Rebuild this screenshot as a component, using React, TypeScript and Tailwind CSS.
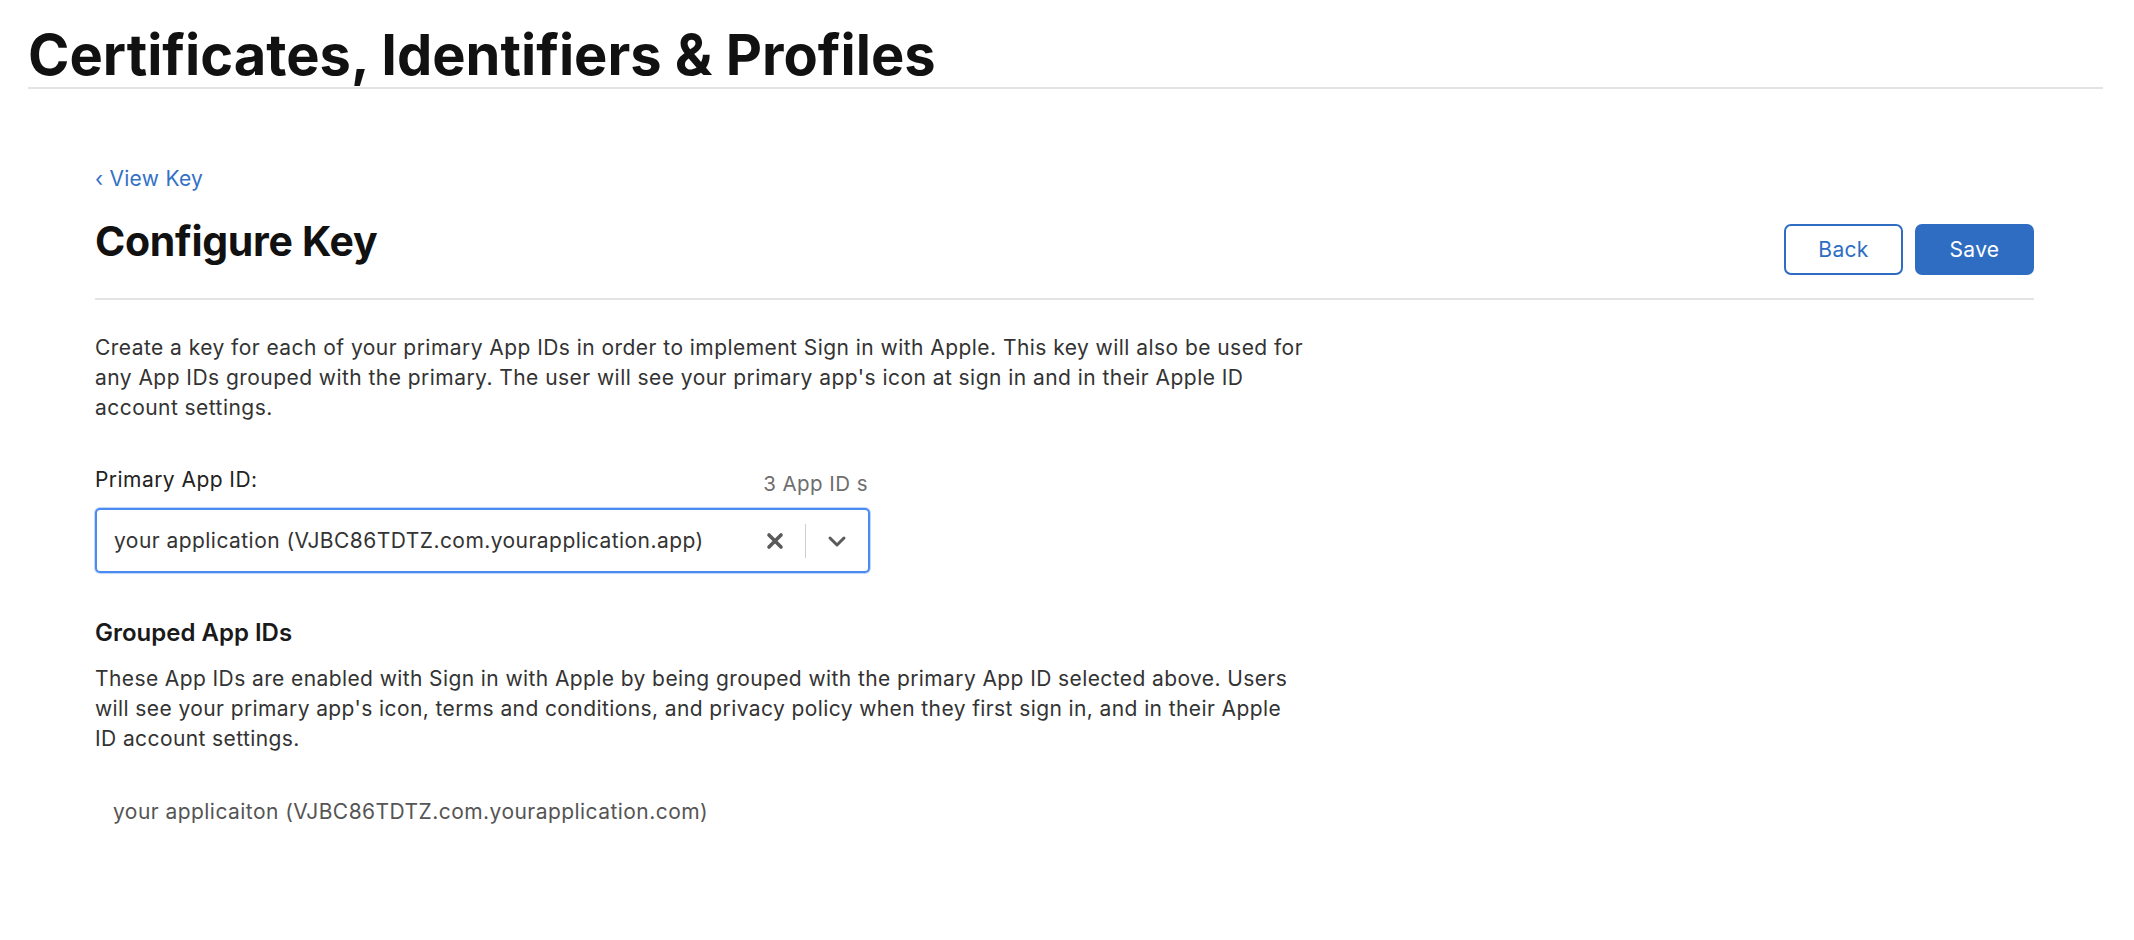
import React from "react";

export default function App() {
  return (
    <div className="min-h-screen bg-white text-[#1d1d1f]" style={{ fontFamily: "Inter, 'Noto Sans', sans-serif" }}>
      <header className="ml-[28px] mr-[31px] pt-[27px] pb-[4px] border-b-2 border-[#e3e3e3]">
        <h1 className="text-[56px] leading-[56px] font-bold tracking-[0px] text-[#111]">
          Certificates, Identifiers &amp; Profiles
        </h1>
      </header>

      <main className="ml-[95px] mr-[100px]">
        <div className="pt-[75px]">
          <a className="text-[21px] leading-[30px] tracking-[0.3px] text-[#3471c6] flex items-center gap-[6px]" href="#">
            <span>‹</span>
            <span>View Key</span>
          </a>
        </div>

        <div className="flex items-start justify-between pt-[30px] pb-[23px] border-b-2 border-[#e3e3e3]">
          <h2 className="text-[41px] leading-[34px] font-bold text-[#111] tracking-[-0.3px]">Configure Key</h2>
          <div className="flex gap-[12px]">
            <button className="w-[119px] h-[51px] rounded-[7px] border-2 border-[#2f6dc3] text-[#2f6dc3] text-[21px] tracking-[0.3px] bg-white">
              Back
            </button>
            <button className="w-[119px] h-[51px] rounded-[7px] bg-[#2f6dc3] text-white text-[21px] tracking-[0.3px]">
              Save
            </button>
          </div>
        </div>

        <p className="mt-[33px] text-[21px] leading-[30px] tracking-[0.45px] text-[#333]">
          Create a key for each of your primary App IDs in order to implement Sign in with Apple. This key will also be used for
          <br />
          any App IDs grouped with the primary. The user will see your primary app's icon at sign in and in their Apple ID
          <br />
          account settings.
        </p>

        <div className="mt-[42px] w-[775px]">
          <div className="flex items-end justify-between">
            <label className="text-[21px] leading-[30px] tracking-[0.45px] text-[#222]">Primary App ID:</label>
            <span className="text-[20.5px] leading-[30px] tracking-[0.45px] text-[#6e6e6e] mr-[2px] translate-y-[4px]">3 App ID s</span>
          </div>
          <div className="mt-[13px] h-[65px] rounded-[5px] border-2 border-[#4c8bf0] shadow-[0_0_0_1px_rgba(76,139,240,0.35)] flex items-center bg-white">
            <span className="flex-1 pl-[17px] text-[21px] tracking-[0.45px] text-[#333]">
              your application (VJBC86TDTZ.com.yourapplication.app)
            </span>
            <div className="flex items-center h-full">
              <svg width="20" height="20" viewBox="0 0 20 20" className="mr-[20px]">
                <path d="M4 4 L16 16 M16 4 L4 16" stroke="#5a5a5a" strokeWidth="3.6" strokeLinecap="round" />
              </svg>
              <div className="w-px h-[34px] bg-[#cfcfcf]" />
              <svg width="20" height="14" viewBox="0 0 20 14" className="mx-[21px]">
                <path d="M3 4 L10 11 L17 4" stroke="#5a5a5a" strokeWidth="3" fill="none" strokeLinecap="round" strokeLinejoin="round" />
              </svg>
            </div>
          </div>
        </div>

        <h3 className="mt-[45px] text-[24px] leading-[30px] font-semibold text-[#1a1a1a]">Grouped App IDs</h3>
        <p className="mt-[16px] text-[21px] leading-[30px] tracking-[0.4px] text-[#333]">
          These App IDs are enabled with Sign in with Apple by being grouped with the primary App ID selected above. Users
          <br />
          will see your primary app's icon, terms and conditions, and privacy policy when they first sign in, and in their Apple
          <br />
          ID account settings.
        </p>

        <div className="mt-[43px] pl-[18px] text-[21px] leading-[30px] tracking-[0.45px] text-[#555]">
          your applicaiton (VJBC86TDTZ.com.yourapplication.com)
        </div>
      </main>
    </div>
  );
}
